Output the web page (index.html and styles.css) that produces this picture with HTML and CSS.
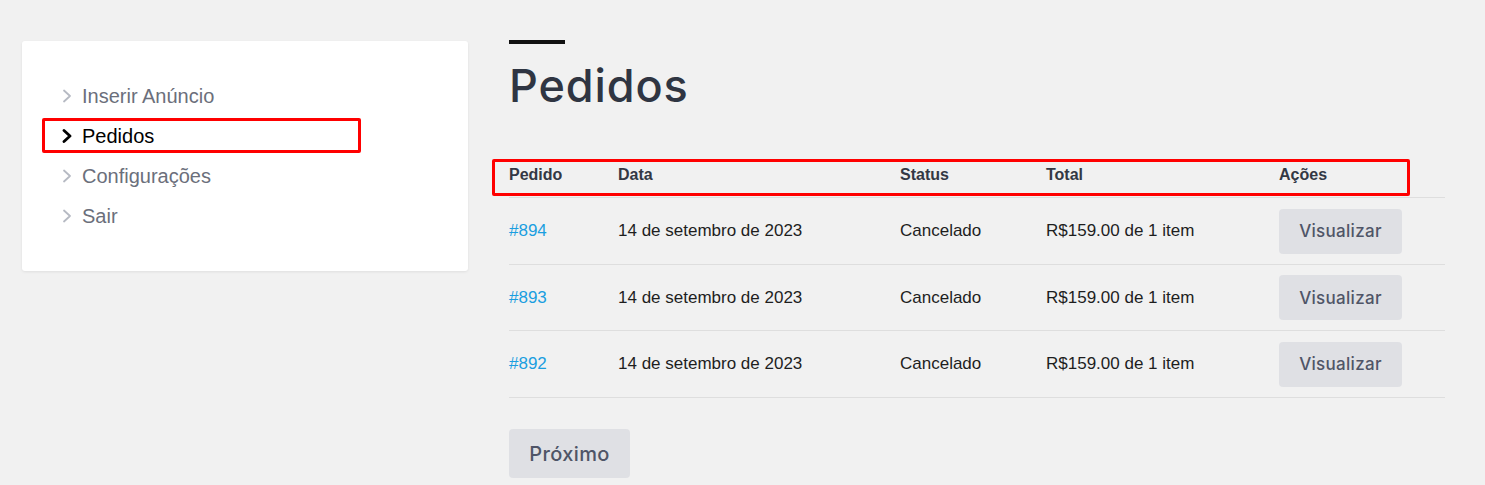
FILE: index.html
```html
<!DOCTYPE html>
<html lang="pt">
<head>
<meta charset="utf-8">
<title>Pedidos</title>
<link rel="stylesheet" href="styles.css">
</head>
<body>
<div class="page">
  <aside class="card">
    <ul class="menu">
      <li class="menu-item"><svg class="chev" viewBox="0 0 10 14" width="10" height="14"><polyline points="2,1.5 8,7 2,12.5"/></svg><span>Inserir Anúncio</span></li>
      <li class="menu-item active"><svg class="chev" viewBox="0 0 10 14" width="10" height="14"><polyline points="2,1.5 8,7 2,12.5"/></svg><span>Pedidos</span></li>
      <li class="menu-item"><svg class="chev" viewBox="0 0 10 14" width="10" height="14"><polyline points="2,1.5 8,7 2,12.5"/></svg><span>Configurações</span></li>
      <li class="menu-item"><svg class="chev" viewBox="0 0 10 14" width="10" height="14"><polyline points="2,1.5 8,7 2,12.5"/></svg><span>Sair</span></li>
    </ul>
  </aside>
  <main class="main">
    <div class="accent"></div>
    <h1 class="title">Pedidos</h1>
    <div class="orders">
      <div class="row head">
        <div>Pedido</div><div>Data</div><div>Status</div><div>Total</div><div>Ações</div>
      </div>
      <div class="row">
        <div><a class="link" href="#">#894</a></div><div>14 de setembro de 2023</div><div>Cancelado</div><div>R$159.00 de 1 item</div><div><a class="btn" href="#">Visualizar</a></div>
      </div>
      <div class="row">
        <div><a class="link" href="#">#893</a></div><div>14 de setembro de 2023</div><div>Cancelado</div><div>R$159.00 de 1 item</div><div><a class="btn" href="#">Visualizar</a></div>
      </div>
      <div class="row">
        <div><a class="link" href="#">#892</a></div><div>14 de setembro de 2023</div><div>Cancelado</div><div>R$159.00 de 1 item</div><div><a class="btn" href="#">Visualizar</a></div>
      </div>
    </div>
    <div class="pager"><a class="btn btn-lg" href="#">Próximo</a></div>
  </main>
</div>
</body>
</html>
```

FILE: styles.css
```css
*, *::before, *::after { box-sizing: border-box; }
html, body { margin: 0; padding: 0; }
body {
  background: #f1f1f1;
  font-family: "Liberation Sans", Arial, sans-serif;
  color: #1e1e1e;
  height: 485px;
  overflow: hidden;
}
.page {
  display: flex;
  align-items: flex-start;
  padding: 40px 0 0 22px;
}
.card {
  width: 446px;
  margin-top: 1px;
  background: #fff;
  border-radius: 3px;
  box-shadow: 0 1px 3px rgba(0,0,0,0.08);
  padding: 35px 0 35px 40px;
}
.menu { list-style: none; margin: 0; padding: 0; }
.menu-item {
  position: relative;
  display: flex;
  align-items: center;
  height: 40px;
  font-size: 20px;
  color: #6b6f7b;
}
.chev {
  width: 10px;
  height: 14px;
  margin-right: 10px;
  fill: none;
  stroke: #b6bac3;
  stroke-width: 1.8;
  stroke-linecap: round;
  stroke-linejoin: round;
}
.menu-item.active { color: #000; }
.menu-item.active .chev { stroke: #000; stroke-width: 2.8; }
.menu-item.active::after {
  content: "";
  position: absolute;
  left: -20px;
  top: 2px;
  width: 319px;
  height: 35px;
  border: 3px solid #ff0000;
  border-radius: 2px;
}
.main {
  margin-left: 41px;
  width: 936px;
}
.accent {
  width: 56px;
  height: 4px;
  background: #111;
}
.title {
  margin: 12px 0 0;
  font-family: "Inter", sans-serif;
  font-weight: 500;
  font-size: 45px;
  line-height: 60px;
  color: #2f3542;
  letter-spacing: 0.9px;
}
.orders { margin-top: 41px; }
.row {
  display: grid;
  grid-template-columns: 109px 282px 146px 233px 166px;
  align-items: center;
  border-bottom: 1px solid #dedede;
  height: 67px;
  font-size: 17px;
}
.row.head {
  position: relative;
  height: 41px;
  font-weight: bold;
  font-size: 16px;
  color: #333844;
  padding-bottom: 4px;
}
.row.head::after {
  content: "";
  position: absolute;
  left: -17px;
  top: 2px;
  width: 918px;
  height: 37px;
  border: 3px solid #ff0000;
  border-radius: 2px;
}
.row:nth-child(3) { height: 66px; }
.link { color: #1a9ee0; text-decoration: none; }
.btn {
  display: inline-flex;
  align-items: center;
  justify-content: center;
  width: 123px;
  height: 45px;
  background: #dfe0e4;
  border-radius: 4px;
  color: #4f5567;
  text-decoration: none;
  font-family: "Inter", sans-serif;
  font-weight: 500;
  font-size: 17px;
  letter-spacing: 0.3px;
}
.pager { margin-top: 31px; }
.btn-lg {
  width: 121px;
  height: 49px;
  font-size: 20px;
  letter-spacing: 0.4px;
}
```
